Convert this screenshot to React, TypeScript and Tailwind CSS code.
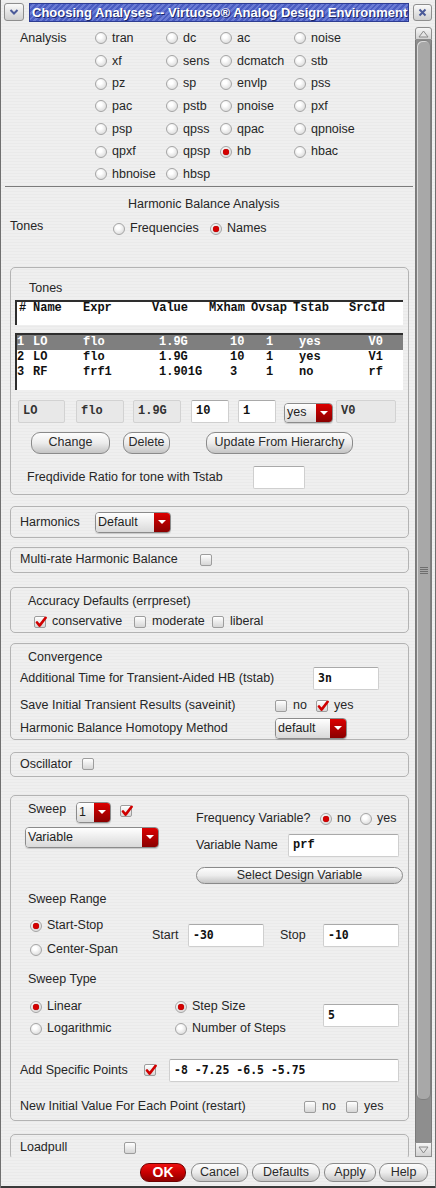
import React from "react";

const analyses = [
  ["tran", "dc", "ac", "noise"],
  ["xf", "sens", "dcmatch", "stb"],
  ["pz", "sp", "envlp", "pss"],
  ["pac", "pstb", "pnoise", "pxf"],
  ["psp", "qpss", "qpac", "qpnoise"],
  ["qpxf", "qpsp", "hb", "hbac"],
  ["hbnoise", "hbsp"],
];

const tones = [
  { n: "1", name: "LO", expr: "flo", value: "1.9G", mx: "10", ov: "1", ts: "yes", src: "V0" },
  { n: "2", name: "LO", expr: "flo", value: "1.9G", mx: "10", ov: "1", ts: "yes", src: "V1" },
  { n: "3", name: "RF", expr: "frf1", value: "1.901G", mx: "3", ov: "1", ts: "no", src: "rf" },
];

function Radio({ on }: { on?: boolean }) {
  return (
    <span className="flex h-[12px] w-[12px] shrink-0 items-center justify-center rounded-full border border-[#a5a5a5] bg-[radial-gradient(circle_at_40%_35%,#ffffff_20%,#d0d0d0)]">
      {on && <span className="h-[6px] w-[6px] rounded-full bg-[#d40000] shadow-[0_0_1px_#600]" />}
    </span>
  );
}

function Check({ on }: { on?: boolean }) {
  return (
    <span className="relative h-[12px] w-[12px] shrink-0 rounded-[2px] border border-[#9d9d9d] bg-linear-to-b from-white to-[#d6d6d6]">
      {on && (
        <svg width="12" height="12" viewBox="0 0 12 12" className="absolute left-[0px] top-[-1px]">
          <path d="M2 6.5 L4.6 9.6 L10.6 1.8" stroke="#d00000" strokeWidth="2.6" fill="none" strokeLinecap="round" strokeLinejoin="round" />
        </svg>
      )}
    </span>
  );
}

function Opt({ on, label, className = "" }: { on?: boolean; label: string; className?: string }) {
  return (
    <div className={`flex items-center gap-[5px] ${className}`}>
      <Radio on={on} />
      <span>{label}</span>
    </div>
  );
}

function Tick({ on, label, className = "" }: { on?: boolean; label: string; className?: string }) {
  return (
    <div className={`flex items-center gap-[6px] ${className}`}>
      <Check on={on} />
      <span>{label}</span>
    </div>
  );
}

function Drop({ label, className = "" }: { label: string; className?: string }) {
  return (
    <div className={`flex overflow-hidden rounded-[4px] border border-[#8b8b8b] shadow-[0_1px_1px_rgba(0,0,0,0.15)] ${className}`}>
      <div className="flex flex-1 items-center bg-linear-to-b from-white to-[#d9d9d9] pl-[2px] text-[#1e1e1e]">{label}</div>
      <div className="flex w-[16px] items-center justify-center bg-linear-to-b from-[#dc0000] to-[#8a0000]">
        <span className="h-0 w-0 border-x-[4px] border-t-[4px] border-x-transparent border-t-white" />
      </div>
    </div>
  );
}

function Field({ children, gray, className = "" }: { children?: React.ReactNode; gray?: boolean; className?: string }) {
  return (
    <div
      className={`flex h-[23px] items-center rounded-[2px] pl-[4px] font-['Liberation_Mono',monospace] text-[12px] font-bold ${
        gray
          ? "border border-[#d2d2d2] bg-[#e8e8e8] text-[#333]"
          : "border border-[#cfcfcf] border-t-[#a9a9a9] bg-white text-[#111]"
      } ${className}`}
    >
      {children}
    </div>
  );
}

function Btn({ children, className = "" }: { children: React.ReactNode; className?: string }) {
  return (
    <div
      className={`flex items-center justify-center rounded-[9px] border border-[#8a8a8a] bg-linear-to-b from-[#fdfdfd] via-[#ececec] to-[#c4c4c4] text-[#2a2a2a] ${className}`}
    >
      {children}
    </div>
  );
}

function Box({ children, className = "" }: { children: React.ReactNode; className?: string }) {
  return <div className={`ml-[10px] w-[399px] rounded-[5px] border border-[#b3b3b3] ${className}`}>{children}</div>;
}

export default function App() {
  return (
    <div className="relative h-[1188px] w-[436px] overflow-hidden bg-[repeating-linear-gradient(180deg,#efefef_0px,#efefef_2px,#eaeaea_2px,#eaeaea_3px)] font-['Liberation_Sans',Arial,sans-serif] text-[12.5px] text-[#262626] shadow-[inset_1px_0_0_#707070,inset_-1px_0_0_#707070,inset_0_-2px_0_#3a3a3a]">
      {/* Title bar */}
      <div className="flex h-[24px] items-start pt-[3px]">
        <div className="ml-[4px] flex h-[18px] w-[20px] items-center justify-center rounded-[3px] border border-[#8e8e8e] bg-linear-to-b from-[#fafafa] to-[#cfcfcf]">
          <svg width="10" height="8" viewBox="0 0 10 8">
            <path d="M1.5 2 L5 5.5 L8.5 2" stroke="#4b5a99" strokeWidth="2" fill="none" />
          </svg>
        </div>
        <div className="ml-[5px] h-[19px] w-[380px] overflow-hidden whitespace-nowrap border border-[#2d3c92] bg-[repeating-linear-gradient(135deg,#4a5dc2_0px,#4a5dc2_2px,#6a7bd4_2px,#6a7bd4_4px)] pl-[2px] text-[13px] font-bold leading-[17px] text-white [text-shadow:1px_1px_0_#1b2568]">
          Choosing Analyses -- Virtuoso® Analog Design Environment
        </div>
        <div className="ml-[4px] mt-[1px] flex h-[17px] w-[19px] items-center justify-center rounded-[3px] border border-[#8e8e8e] bg-linear-to-b from-[#fafafa] to-[#cfcfcf]">
          <svg width="9" height="9" viewBox="0 0 9 9">
            <path d="M1.5 1.5 L7.5 7.5 M7.5 1.5 L1.5 7.5" stroke="#4b5a99" strokeWidth="2" />
          </svg>
        </div>
      </div>

      <div className="flex h-[1133px]">
        {/* Scrollable form */}
        <div className="w-[413px] overflow-hidden">
          {/* Analysis */}
          <div className="flex pt-[3px]">
            <div className="flex h-[22.7px] w-[95px] items-center pl-[20px]">Analysis</div>
            <div className="grid grid-cols-[71px_54px_74px_80px] auto-rows-[22.7px]">
              {analyses.flat().map((a) => (
                <Opt key={a} label={a} on={a === "hb"} />
              ))}
            </div>
          </div>
          <div className="ml-[5px] w-[409px] border-t border-[#7c7c7c]" />

          <div className="mt-[7px] h-[20px] pl-[128px] leading-[20px]">Harmonic Balance Analysis</div>
          <div className="mt-[2px] flex items-start">
            <div className="h-[20px] w-[113px] pl-[10px] leading-[20px]">Tones</div>
            <div className="mt-[3px] flex h-[20px] items-center">
              <Opt label="Frequencies" className="w-[97px]" />
              <Opt label="Names" on />
            </div>
          </div>

          {/* Tones */}
          <Box className="mt-[28px] pb-[5px]">
            <div className="ml-[18px] mt-[10px] h-[20px] leading-[20px]">Tones</div>
            <div className="ml-[4px] mt-[2px] h-[25px] w-[388px] border-l-2 border-t-2 border-[#2e2e2e] bg-white font-['Liberation_Mono',monospace] text-[12px] font-bold text-[#111]">
              <div className="flex h-[13px] pl-[2px] leading-[13px]">
                <span className="w-[14px]">#</span>
                <span className="w-[50px]">Name</span>
                <span className="w-[69px]">Expr</span>
                <span className="w-[57px]">Value</span>
                <span className="w-[42px]">Mxham</span>
                <span className="w-[42px]">Ovsap</span>
                <span className="w-[56px]">Tstab</span>
                <span>SrcId</span>
              </div>
            </div>
            <div className="ml-[4px] mt-[8px] h-[57px] w-[388px] border-l-2 border-t-2 border-[#2e2e2e] bg-white font-['Liberation_Mono',monospace] text-[12px] font-bold text-[#111]">
              {tones.map((t, i) => (
                <div key={t.n} className={`flex h-[15px] leading-[15px] ${i === 0 ? "bg-[#7f7f7f] text-white" : ""}`}>
                  <span className="w-[16px]">{t.n}</span>
                  <span className="w-[50px]">{t.name}</span>
                  <span className="w-[76px]">{t.expr}</span>
                  <span className="w-[71px]">{t.value}</span>
                  <span className="w-[36px]">{t.mx}</span>
                  <span className="w-[33px]">{t.ov}</span>
                  <span className="w-[50px]">{t.ts}</span>
                  <span className="w-[34px] text-right">{t.src}</span>
                </div>
              ))}
            </div>
            <div className="ml-[7px] mt-[10px] flex items-start">
              <Field gray className="w-[47px]">LO</Field>
              <Field gray className="ml-[11px] w-[48px]">flo</Field>
              <Field gray className="ml-[9px] w-[48px]">1.9G</Field>
              <Field className="ml-[10px] w-[38px]">10</Field>
              <Field className="ml-[9px] w-[38px]">1</Field>
              <Drop label="yes" className="ml-[8px] mt-[3px] h-[20px] w-[49px]" />
              <Field gray className="ml-[3px] w-[60px]">V0</Field>
            </div>
            <div className="mt-[9px] flex h-[22px]">
              <Btn className="ml-[20px] w-[79px]">Change</Btn>
              <Btn className="ml-[13px] w-[47px]">Delete</Btn>
              <Btn className="ml-[36px] w-[147px]">Update From Hierarchy</Btn>
            </div>
            <div className="mt-[12px] flex h-[23px] items-center">
              <span className="ml-[16px] w-[226px]">Freqdivide Ratio for tone with Tstab</span>
              <Field className="w-[52px]" />
            </div>
          </Box>

          <Box className="mt-[11px] pb-[4px] pt-[5px]">
            <div className="flex h-[21px] items-center">
              <span className="ml-[9px] w-[75px]">Harmonics</span>
              <Drop label="Default" className="h-[21px] w-[76px]" />
            </div>
          </Box>

          <Box className="mt-[9px]">
            <div className="flex h-[24px] items-center">
              <span className="ml-[9px] w-[180px]">Multi-rate Harmonic Balance</span>
              <Check />
            </div>
          </Box>

          <Box className="mt-[14px] pt-[3px]">
            <div className="ml-[17px] h-[20px] leading-[20px]">Accuracy Defaults (errpreset)</div>
            <div className="ml-[23px] mt-[1px] flex h-[20px] items-center">
              <Tick on label="conservative" className="w-[100px]" />
              <Tick label="moderate" className="w-[78px]" />
              <Tick label="liberal" />
            </div>
          </Box>

          <Box className="mt-[10px] pt-[3px]">
            <div className="ml-[17px] h-[20px] leading-[20px]">Convergence</div>
            <div className="flex h-[23px] items-center">
              <span className="ml-[9px] w-[293px]">Additional Time for Transient-Aided HB (tstab)</span>
              <Field className="w-[66px] !font-['DejaVu_Sans_Mono',monospace] !text-[11.5px]">3n</Field>
            </div>
            <div className="mt-[6px] flex h-[20px] items-center">
              <span className="ml-[9px] w-[255px]">Save Initial Transient Results (saveinit)</span>
              <Tick label="no" className="w-[41px]" />
              <Tick on label="yes" />
            </div>
            <div className="mt-[2px] flex h-[21px] items-center">
              <span className="ml-[9px] w-[255px]">Harmonic Balance Homotopy Method</span>
              <Drop label="default" className="h-[21px] w-[72px]" />
            </div>
          </Box>

          <Box className="mt-[12px]">
            <div className="flex h-[23px] items-center">
              <span className="ml-[9px] w-[62px]">Oscillator</span>
              <Check />
            </div>
          </Box>

          {/* Sweep */}
          <Box className="mt-[18px] pb-[3px]">
            <div className="flex items-start">
              <div className="w-[185px]">
                <div className="mt-[6px] flex items-start">
                  <span className="ml-[17px] h-[15px] w-[48px] leading-[15px]">Sweep</span>
                  <Drop label="1" className="h-[21px] w-[35px]" />
                  <div className="ml-[9px] mt-[3px] flex">
                    <Check on />
                  </div>
                </div>
                <Drop label="Variable" className="ml-[14px] mt-[4px] h-[21px] w-[134px]" />
              </div>
              <div>
                <div className="mt-[13px] flex h-[20px] items-center">
                  <span className="w-[124px]">Frequency Variable?</span>
                  <Opt on label="no" className="w-[40px]" />
                  <Opt label="yes" />
                </div>
                <div className="mt-[5px] flex h-[23px] items-center">
                  <span className="w-[92px]">Variable Name</span>
                  <Field className="w-[111px]">prf</Field>
                </div>
                <Btn className="mt-[10px] h-[17px] w-[207px]">Select Design Variable</Btn>
              </div>
            </div>

            <div className="ml-[17px] mt-[5px] h-[20px] leading-[20px]">Sweep Range</div>
            <div className="mt-[7px] flex items-start">
              <div className="ml-[19px] w-[122px]">
                <Opt on label="Start-Stop" className="h-[20px]" />
                <Opt label="Center-Span" className="mt-[4px] h-[20px]" />
              </div>
              <div className="mt-[8px] flex h-[23px] items-center">
                <span className="w-[36px]">Start</span>
                <Field className="w-[76px] !font-['DejaVu_Sans_Mono',monospace] !text-[11.5px]">-30</Field>
                <span className="ml-[16px] w-[43px]">Stop</span>
                <Field className="w-[76px] !font-['DejaVu_Sans_Mono',monospace] !text-[11.5px]">-10</Field>
              </div>
            </div>

            <div className="ml-[17px] mt-[9px] h-[20px] leading-[20px]">Sweep Type</div>
            <div className="mt-[8px] flex items-start">
              <div className="ml-[19px] w-[145px]">
                <Opt on label="Linear" className="h-[20px]" />
                <Opt label="Logarithmic" className="mt-[2px] h-[20px]" />
              </div>
              <div className="w-[148px]">
                <Opt on label="Step Size" className="h-[20px]" />
                <Opt label="Number of Steps" className="mt-[2px] h-[20px]" />
              </div>
              <Field className="mt-[7px] w-[76px] !font-['DejaVu_Sans_Mono',monospace] !text-[11.5px]">5</Field>
            </div>

            <div className="mt-[20px] flex h-[23px] items-center">
              <span className="ml-[9px] w-[124px]">Add Specific Points</span>
              <Check on />
              <Field className="ml-[13px] w-[230px] !font-['DejaVu_Sans_Mono',monospace] !text-[11.5px]">-8 -7.25 -6.5 -5.75</Field>
            </div>
            <div className="mt-[15px] flex h-[20px] items-center">
              <span className="ml-[9px] w-[284px]">New Initial Value For Each Point (restart)</span>
              <Tick label="no" className="w-[42px]" />
              <Tick label="yes" />
            </div>
          </Box>

          <Box className="mt-[13px] pt-[2px]">
            <div className="flex h-[22px] items-center">
              <span className="ml-[9px] w-[104px]">Loadpull</span>
              <Check />
            </div>
          </Box>
        </div>

        {/* Scrollbar */}
        <div className="ml-[2px] flex w-[17px] flex-col pt-[3px]">
          <div className="flex h-[13px] items-center justify-center rounded-t-[3px] border border-[#8d8d8d] bg-linear-to-b from-[#f6f6f6] to-[#d2d2d2]">
            <svg width="11" height="8" viewBox="0 0 11 8">
              <path d="M1 7 L5.5 1 L10 7 Z" fill="#e4e4e4" stroke="#8a8a8a" strokeWidth="1" />
            </svg>
          </div>
          <div className="flex flex-1 flex-col border-x border-[#7a7a7a] bg-[#8e8e8e]">
            <div className="flex h-[1060px] items-center justify-center rounded-[6px] border border-[#7f7f7f] bg-[#b9b9b9] bg-[radial-gradient(#a8a8a8_1px,transparent_1px)] bg-[length:2px_2px] shadow-[inset_1px_1px_0_#d8d8d8]">
              <div className="flex flex-col gap-[1px]">
                <span className="h-[1px] w-[8px] bg-[#6e6e6e]" />
                <span className="h-[1px] w-[8px] bg-[#6e6e6e]" />
                <span className="h-[1px] w-[8px] bg-[#6e6e6e]" />
                <span className="h-[1px] w-[8px] bg-[#6e6e6e]" />
              </div>
            </div>
          </div>
          <div className="flex h-[15px] items-center justify-center border border-[#8d8d8d] bg-linear-to-b from-[#f6f6f6] to-[#d2d2d2]">
            <svg width="11" height="8" viewBox="0 0 11 8">
              <path d="M1 1 L5.5 7 L10 1 Z" fill="#e4e4e4" stroke="#8a8a8a" strokeWidth="1" />
            </svg>
          </div>
        </div>
      </div>

      {/* Dialog buttons */}
      <div className="mt-[6px] flex h-[19px]">
        <div className="ml-[140px] flex w-[46px] items-center justify-center rounded-[9px] border border-[#6e0000] bg-linear-to-b from-[#ee1010] via-[#c80000] to-[#8e0000] text-[14px] font-bold text-white">
          OK
        </div>
        <Btn className="ml-[5px] w-[57px]">Cancel</Btn>
        <Btn className="ml-[4px] w-[68px]">Defaults</Btn>
        <Btn className="ml-[4px] w-[52px]">Apply</Btn>
        <Btn className="ml-[3px] w-[49px]">Help</Btn>
      </div>
    </div>
  );
}
